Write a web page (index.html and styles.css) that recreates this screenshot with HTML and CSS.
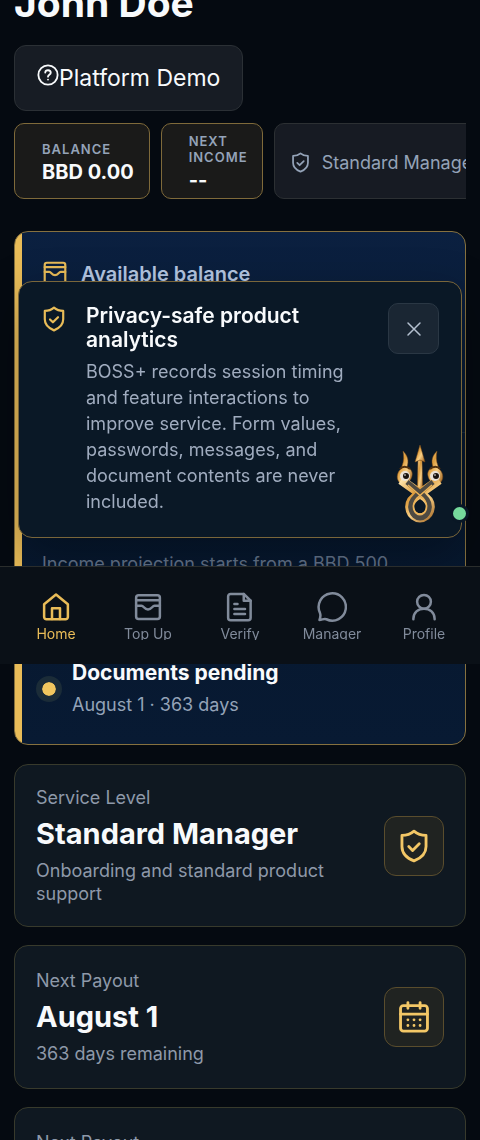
FILE: index.html
```html
<!DOCTYPE html>
<html lang="en">

<head>
    <meta charset="UTF-8">
    <meta name="viewport" content="width=device-width, initial-scale=1.0">
    <title>BOSS+ Dashboard</title>
    <link rel="stylesheet" href="styles.css">
</head>

<body>
    <!-- Shared icons -->
    <svg class="sprite" aria-hidden="true">
        <symbol id="icon-shield" viewBox="0 0 24 24">
            <path d="M12 1.500c2.300 2 5 3 8.500 3v7.800c0 5-3.400 8.200-8.500 10.200-5.100-2-8.500-5.200-8.500-10.200V4.500c3.500 0 6.200-1 8.500-3z" />
            <path d="M8.300 12.400l2.700 2.700 4.700-4.700" />
        </symbol>
        <symbol id="icon-wallet" viewBox="0 0 24 24">
            <rect x="2.500" y="2.500" width="19" height="19" rx="2" />
            <path d="M2.500 6.600h19M2.500 11h4.300c1.800 0 2.200 3 5.200 3s3.400-3 5.200-3h4.300" />
        </symbol>
        <symbol id="icon-calendar" viewBox="0 0 24 24">
            <rect x="2.500" y="4" width="19" height="18" rx="2" />
            <path d="M2.500 10h19M7.700 1.800v4M16.300 1.800v4" />
            <path d="M7.700 14h.01M12 14h.01M16.300 14h.01M7.700 18h.01M12 18h.01M16.300 18h.01" />
        </symbol>
    </svg>

    <main class="page">
        <h1>John Doe</h1>
        <button type="button" class="demo-btn">
            <svg class="icon" viewBox="0 0 24 24"><circle cx="12" cy="12" r="10.500" /><path d="M9 9.300c.3-3.400 6-3.200 6 .2 0 2.200-3 2.300-3 4.300M12 17h.01" /></svg>
            <span>Platform Demo</span>
        </button>

        <div class="chips">
            <div class="chip gold">
                <span class="chip-label">Balance</span>
                <strong>BBD 0.00</strong>
            </div>
            <div class="chip gold income">
                <span class="chip-label">Next Income</span>
                <strong>--</strong>
            </div>
            <div class="chip level">
                <svg class="icon"><use href="#icon-shield" /></svg>
                <span>Standard Manager</span>
            </div>
        </div>

        <section class="card hero">
            <div class="hero-top">
                <svg class="icon"><use href="#icon-wallet" /></svg>
                <h2>Available balance</h2>
            </div>
            <div class="hero-note">
                <p>Income projection starts from a BBD 500 balance.</p>
            </div>
            <div class="status">
                <span class="dot"></span>
                <div>
                    <h3>Documents pending</h3>
                    <p>August 1 · 363 days</p>
                </div>
            </div>
        </section>

        <section class="card stat">
            <div class="stat-text">
                <p>Service Level</p>
                <h2>Standard Manager</h2>
                <p>Onboarding and standard product support</p>
            </div>
            <div class="stat-icon"><svg class="icon"><use href="#icon-shield" /></svg></div>
        </section>

        <section class="card stat">
            <div class="stat-text">
                <p>Next Payout</p>
                <h2>August 1</h2>
                <p>363 days remaining</p>
            </div>
            <div class="stat-icon"><svg class="icon"><use href="#icon-calendar" /></svg></div>
        </section>

        <section class="card stat">
            <div class="stat-text">
                <p>Next Payout</p>
            </div>
        </section>
    </main>

    <!-- Analytics notice -->
    <aside class="notice">
        <svg class="icon"><use href="#icon-shield" /></svg>
        <div class="notice-text">
            <h2>Privacy-safe product analytics</h2>
            <p>BOSS+ records session timing and feature interactions to improve service. Form values, passwords, messages, and document contents are never included.</p>
        </div>
        <button type="button" class="close-btn" aria-label="Close">
            <svg class="icon" viewBox="0 0 24 24"><path d="M4 4l16 16M20 4L4 20" /></svg>
        </button>
    </aside>

    <!-- Assistant -->
    <button type="button" class="assistant" aria-label="Open assistant">
        <svg viewBox="0 0 60 88">
            <defs>
                <linearGradient id="gold" x1="0" y1="0" x2="1" y2="1">
                    <stop offset="0" stop-color="#ffe6ae" />
                    <stop offset="0.350" stop-color="#dd9c3c" />
                    <stop offset="0.600" stop-color="#f8cf85" />
                    <stop offset="1" stop-color="#9a5c1a" />
                </linearGradient>
            </defs>
            <!-- Prongs and shaft -->
            <g fill="url(#gold)" stroke="#7b4815" stroke-width="0.500">
                <path d="M28 20h4l.7 30h-5.400z" />
                <path d="M30 5l5 17-5-2-5 2z" />
                <path d="M13 11c5 5 6 10 4 16 4 2 6 5 5 9-1 5-5 8-9 8-5-1-7-6-5-11 1-3 4-4 4-7 2-5 2-10 1-15z" />
                <path d="M47 11c-5 5-6 10-4 16-4 2-6 5-5 9 1 5 5 8 9 8 5-1 7-6 5-11-1-3-4-4-4-7-2-5-2-10-1-15z" />
            </g>
            <!-- Knot -->
            <g fill="none" stroke-linejoin="round">
                <path d="M11 40L35 57c10 8 4 21-5 21s-15-13-5-21L49 40" stroke="url(#gold)" stroke-width="9" />
                <path d="M17 42L34 56c10 9 4 22-4 22s-14-13-4-22L43 42" stroke="#4e4a42" stroke-width="5" />
                <path d="M18 45L33 58c7 8 3 16-3 16s-10-8-3-16L42 45" stroke="#eeb457" stroke-width="1.500" />
            </g>
            <!-- Eyes -->
            <path d="M10 29c2-3 7-3 10 0M40 29c3-3 8-3 10 0" fill="none" stroke="#51300e" stroke-width="2" />
            <circle cx="15" cy="36" r="5" fill="#e9e2d8" />
            <circle cx="45" cy="36" r="5" fill="#e9e2d8" />
            <circle cx="16" cy="36" r="3" fill="#17120f" />
            <circle cx="46" cy="36" r="3" fill="#17120f" />
            <circle cx="15" cy="35" r="0.800" fill="#fff" />
            <circle cx="45" cy="35" r="0.800" fill="#fff" />
        </svg>
        <span class="online"></span>
    </button>

    <nav class="tabs">
        <a href="#" class="active">
            <svg class="icon" viewBox="0 0 24 24"><path d="M2.500 9.800L12 2l9.500 7.800v10.200a1.800 1.800 0 0 1-1.800 1.800H4.300A1.800 1.800 0 0 1 2.500 20z" /><path d="M8.800 21.500v-8.500h6.400v8.500" /></svg>
            <span>Home</span>
        </a>
        <a href="#">
            <svg class="icon"><use href="#icon-wallet" /></svg>
            <span>Top Up</span>
        </a>
        <a href="#">
            <svg class="icon" viewBox="0 0 24 24"><path d="M15 1.500H4.500A2 2 0 0 0 2.500 3.500v17a2 2 0 0 0 2 2h14a2 2 0 0 0 2-2V7z" /><path d="M15 1.500V7h5.500M7.500 9.500h2.500M7.500 13.500h8.500M7.500 17.500h8.500" /></svg>
            <span>Verify</span>
        </a>
        <a href="#">
            <svg class="icon" viewBox="0 0 24 24"><path d="M2 22.300c.8-2 1.200-3.600.3-5.800A10.900 10.900 0 1 1 7.500 21.800c-2-.8-3.300.5-5.500.5z" /></svg>
            <span>Manager</span>
        </a>
        <a href="#">
            <svg class="icon" viewBox="0 0 24 24"><circle cx="12" cy="7.800" r="5.500" /><path d="M3.500 21.800v-.4c0-4.800 3.800-8.100 8.500-8.100s8.500 3.300 8.500 8.100v.4" /></svg>
            <span>Profile</span>
        </a>
    </nav>
</body>

</html>
```
FILE: styles.css
```css
* {
    box-sizing: border-box;
}

html {
    scrollbar-width: none;
}

body {
    margin: 0;
    background-color: #050a11;
    color: #f8fafc;
    font-family: Inter, "Liberation Sans", sans-serif;
    font-size: 18px;
    line-height: 23px;
}

h1, h2, h3, p {
    margin: 0;
}

button {
    font-family: inherit;
    color: inherit;
    cursor: pointer;
}

.sprite {
    display: none;
}

.icon {
    flex: none;
    display: block;
    fill: none;
    stroke: currentColor;
    stroke-width: 2;
    stroke-linecap: round;
    stroke-linejoin: round;
}

.page {
    height: 100vh;
    overflow: hidden;
    padding: 0 14px;
}

h1 {
    font-size: 39px;
    line-height: 44px;
    margin: -19px 0 20px;
}

.demo-btn {
    display: flex;
    align-items: center;
    height: 66px;
    padding: 0 22px;
    background-color: #171c24;
    border: 1px solid #2b3035;
    border-radius: 12px;
    font-size: 23px;
}

.demo-btn .icon {
    width: 22px;
    height: 22px;
    margin-bottom: 6px;
}

.chips {
    display: flex;
    gap: 11px;
    margin-top: 12px;
    overflow: hidden;
}

.chip {
    flex: none;
    display: flex;
    flex-direction: column;
    justify-content: center;
    height: 76px;
    padding: 2px 15px 0 27px;
    background-color: #171b23;
    border: 1px solid #2c3033;
    border-radius: 10px;
}

.chip.gold {
    background-color: #1a1a19;
    border-color: #7f6a3a;
}

.chip.income {
    width: 102px;
    padding-right: 10px;
}

.chip-label {
    color: #94a3b8;
    font-size: 13px;
    font-weight: 600;
    line-height: 16px;
    letter-spacing: 1px;
    text-transform: uppercase;
}

.chip strong {
    margin-top: 4px;
    font-size: 20px;
    line-height: 22px;
}

.chip.level {
    flex-direction: row;
    align-items: center;
    gap: 11px;
    padding-left: 15px;
    color: #94a3b8;
}

.chip.level .icon {
    width: 21px;
    height: 21px;
}

.card {
    margin-top: 18px;
    background-color: #0f1821;
    border: 1px solid #383a2c;
    border-radius: 14px;
}

.hero {
    display: flex;
    flex-direction: column;
    height: 514px;
    margin: 32px 0 19px;
    overflow: hidden;
    background: linear-gradient(90deg, #e9bc58 7px, transparent 7px), linear-gradient(#0b2040, #06172d 50%, #081a33);
    border-color: #86713f;
}

.hero-top {
    display: flex;
    gap: 13px;
    height: 201px;
    margin-left: 7px;
    padding: 28px 20px;
    border-bottom: 1px solid #182a3f;
    color: #e9bc58;
}

.hero-top .icon {
    width: 26px;
    height: 26px;
}

.hero-top h2 {
    color: #b4c6e2;
    font-size: 20px;
    line-height: 28px;
    font-weight: 600;
}

.hero-note {
    flex: 1;
    padding: 119px 60px 0 27px;
    color: #64748b;
}

.status {
    display: flex;
    align-items: center;
    gap: 10px;
    padding: 0 21px 23px;
}

.dot {
    width: 26px;
    height: 26px;
    background-color: #f1c65f;
    background-clip: content-box;
    border: 6px solid #1b2c38;
    border-radius: 50%;
}

.status h3 {
    font-size: 21px;
    line-height: 32px;
}

.status p {
    line-height: 32px;
    color: #94a3b8;
}

.stat {
    display: flex;
    align-items: center;
    justify-content: space-between;
    gap: 44px;
    min-height: 144px;
    padding: 21px;
}

.stat-text p {
    color: #8e99a9;
}

.stat-text h2 {
    margin: 8px 0;
    font-size: 29px;
    line-height: 34px;
}

.stat:last-child {
    align-items: flex-start;
    padding-top: 23px;
}

.stat-icon {
    flex: none;
    display: grid;
    place-items: center;
    width: 60px;
    height: 60px;
    background-color: #202321;
    border: 1px solid #5a4d2d;
    border-radius: 12px;
    color: #f3c766;
}

.stat-icon .icon {
    width: 34px;
    height: 34px;
}

/* Notice over the page */
.notice {
    position: fixed;
    top: 281px;
    left: 18px;
    right: 18px;
    display: flex;
    align-items: flex-start;
    padding: 21px 22px 22px;
    background-color: #0a1826;
    border: 1px solid #7a663a;
    border-radius: 14px;
    box-shadow: 0 18px 50px rgba(0, 0, 0, 0.3);
}

.notice > .icon {
    width: 26px;
    height: 26px;
    margin-top: 3px;
    color: #e9bc58;
}

.notice-text {
    flex: 1;
    margin: 0 40px 0 19px;
}

.notice-text h2 {
    margin-top: 1px;
    font-size: 21px;
    line-height: 24px;
    font-weight: 600;
}

.notice-text p {
    margin-top: 7px;
    line-height: 26px;
    color: #a0acbf;
}

.close-btn {
    display: grid;
    place-items: center;
    width: 51px;
    height: 51px;
    padding: 0;
    background-color: #1a2633;
    border: 1px solid #2a3744;
    border-radius: 10px;
    color: #b4c0d0;
}

.close-btn .icon {
    width: 18px;
    height: 18px;
}

.assistant {
    position: fixed;
    top: 440px;
    right: 30px;
    width: 60px;
    padding: 0;
    background: none;
    border: none;
}

.assistant svg {
    display: block;
    width: 100%;
}

.online {
    position: absolute;
    right: -19px;
    bottom: 5px;
    width: 19px;
    height: 19px;
    background-color: #75d99b;
    border: 3px solid #091725;
    border-radius: 50%;
}

.tabs {
    position: fixed;
    top: 566px;
    left: 0;
    right: 0;
    display: flex;
    height: 98px;
    padding: 25px 10px 24px;
    background-color: #0a1017;
    border-top: 1px solid #2a2d2c;
}

.tabs a {
    flex: 1;
    display: flex;
    flex-direction: column;
    align-items: center;
    gap: 5px;
    color: #818b9b;
    font-size: 14px;
    line-height: 14px;
    text-decoration: none;
}

.tabs a span {
    overflow: hidden;
}

.tabs .active {
    color: #e9bc58;
}

.tabs .icon {
    width: 30px;
    height: 30px;
}
```
